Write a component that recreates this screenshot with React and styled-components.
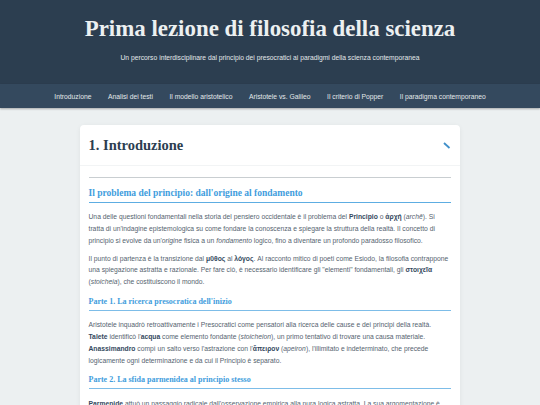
import React from 'react';
import styled, { createGlobalStyle } from 'styled-components';

const Global = createGlobalStyle`
  html, body { margin: 0; padding: 0; height: 405px; overflow: hidden; background: #ecf0f1; }
  body { font-family: "Liberation Sans", Arial, sans-serif; color: #34495e; }
  * { box-sizing: border-box; }
`;

const serif = '"Liberation Serif", Georgia, serif';

const Header = styled.header`
  height: 84px;
  background: #2c3e50;
  color: #ecf0f1;
  text-align: center;
  padding-top: 17px;
`;

const Title = styled.h1`
  margin: 0;
  font-family: ${serif};
  font-weight: 700;
  font-size: 22.9px;
  line-height: 24px;
  color: #ecf0f1;
`;

const Subtitle = styled.p`
  margin: 12px 0 0;
  font-size: 6.75px;
  line-height: 10px;
  color: #e3e8ea;
`;

const Nav = styled.nav`
  height: 24px;
  background: #34495e;
  display: flex;
  justify-content: center;
  align-items: center;
  gap: 16.5px;
  box-shadow: 0 1px 2px rgba(0, 0, 0, 0.3);
  position: relative;
`;

const NavLink = styled.a`
  font-size: 6.75px;
  color: #e3e8ea;
  white-space: nowrap;
`;

const Main = styled.main`
  width: 380px;
  margin: 17px auto 0;
`;

const Card = styled.section`
  background: #fff;
  border-radius: 4px;
  box-shadow: 0 1px 5px rgba(0, 0, 0, 0.06);
`;

const CardHeader = styled.div`
  height: 41px;
  padding: 0 9px 0 8.5px;
  display: flex;
  align-items: center;
  justify-content: space-between;
  border-bottom: 1px solid #f2f4f5;
`;

const SectionTitle = styled.h2`
  margin: 0;
  font-family: ${serif};
  font-weight: 700;
  font-size: 14.5px;
  color: #2c3e50;
`;

const Body = styled.div`
  padding: 11px 9.5px 0 8.5px;
`;

const Rule = styled.hr`
  margin: 0 0 9.5px;
  border: 0;
  border-top: 1px solid #c9ced1;
`;

const Heading = styled.h3`
  margin: ${p => (p.$small ? '9px' : '0')} 0 8.5px;
  padding-bottom: 3px;
  font-family: ${serif};
  font-weight: 700;
  font-size: ${p => (p.$small ? '8px' : '9.5px')};
  line-height: ${p => (p.$small ? '10px' : '11px')};
  color: #3f9ddd;
  border-bottom: 1px solid ${p => (p.$small ? '#7dbde8' : '#5dade2')};
`;

const Para = styled.p`
  margin: 0 0 6.25px;
  font-size: 6.75px;
  line-height: 11.75px;
  color: #55636f;

  b { color: #34495e; }
`;

const PenIcon = () => (
  <svg width="8" height="7" viewBox="0 0 8 7" aria-hidden="true">
    <path d="M1 1 L6.5 6" stroke="#3f8fc9" strokeWidth="1.8" />
  </svg>
);

export default function App() {
  const links = ['Introduzione', 'Analisi dei testi', 'Il modello aristotelico', 'Aristotele vs. Galileo', 'Il criterio di Popper', 'Il paradigma contemporaneo'];
  return (
    <>
      <Global />
      <Header>
        <Title>Prima lezione di filosofia della scienza</Title>
        <Subtitle>Un percorso interdisciplinare dal principio dei presocratici ai paradigmi della scienza contemporanea</Subtitle>
      </Header>
      <Nav>
        {links.map(l => <NavLink key={l}>{l}</NavLink>)}
      </Nav>
      <Main>
        <Card>
          <CardHeader>
            <SectionTitle>1. Introduzione</SectionTitle>
            <PenIcon />
          </CardHeader>
          <Body>
            <Rule />
            <Heading>Il problema del principio: dall'origine al fondamento</Heading>
            <Para>Una delle questioni fondamentali nella storia del pensiero occidentale è il problema del <b>Principio</b> o <b>ἀρχή</b> (<i>archē</i>). Si tratta di un'indagine epistemologica su come fondare la conoscenza e spiegare la struttura della realtà. Il concetto di principio si evolve da un'<i>origine</i> fisica a un <i>fondamento</i> logico, fino a diventare un profondo paradosso filosofico.</Para>
            <Para>Il punto di partenza è la transizione dal <b>μῦθος</b> al <b>λόγος</b>. Al racconto mitico di poeti come Esiodo, la filosofia contrappone una spiegazione astratta e razionale. Per fare ciò, è necessario identificare gli "elementi" fondamentali, gli <b>στοιχεῖα</b> (<i>stoicheia</i>), che costituiscono il mondo.</Para>
            <Heading $small>Parte 1. La ricerca presocratica dell'inizio</Heading>
            <Para>Aristotele inquadrò retroattivamente i Presocratici come pensatori alla ricerca delle cause e dei principi della realtà. <b>Talete</b> identificò l'<b>acqua</b> come elemento fondante (<i>stoicheion</i>), un primo tentativo di trovare una causa materiale. <b>Anassimandro</b> compì un salto verso l'astrazione con l'<b>ἄπειρον</b> (<i>apeiron</i>), l'illimitato e indeterminato, che precede logicamente ogni determinazione e da cui il Principio è separato.</Para>
            <Heading $small>Parte 2. La sfida parmenidea al principio stesso</Heading>
            <Para><b>Parmenide</b> attuò un passaggio radicale dall'osservazione empirica alla pura logica astratta. La sua argomentazione è</Para>
          </Body>
        </Card>
      </Main>
    </>
  );
}
